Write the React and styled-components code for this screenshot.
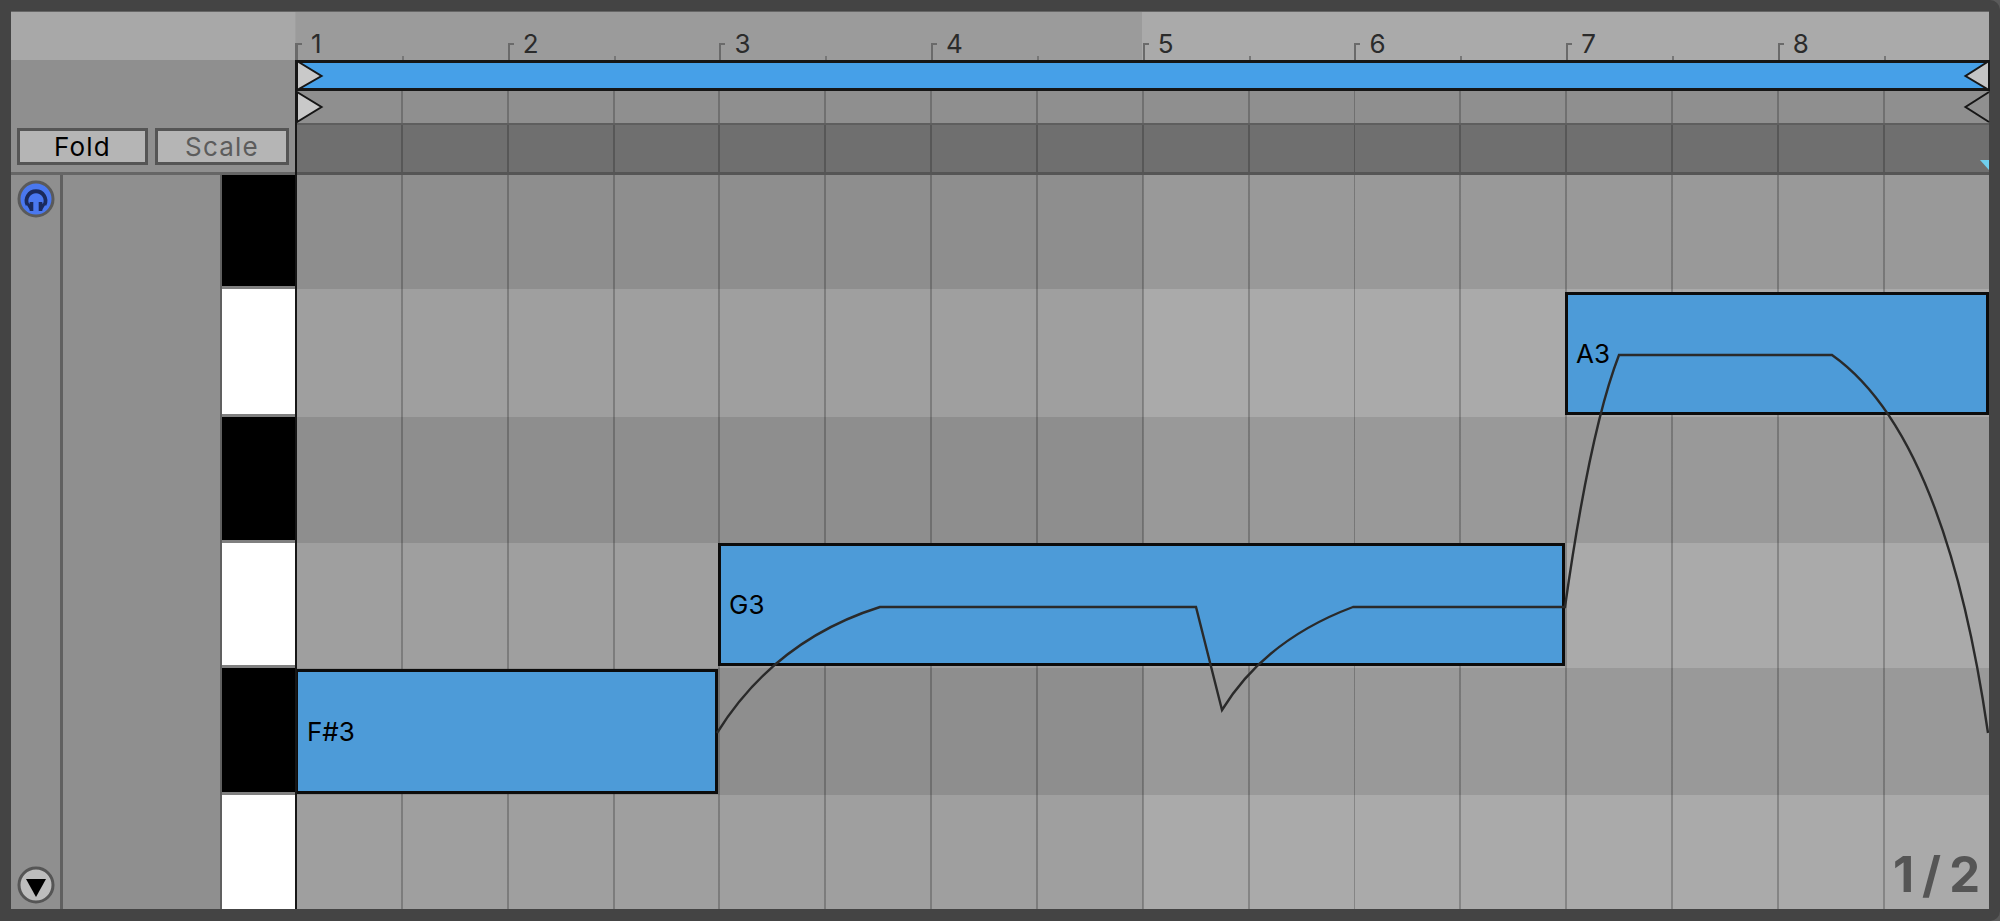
import React from "react";
import styled, { createGlobalStyle } from "styled-components";

const GlobalStyle = createGlobalStyle`
  html, body {
    margin: 0;
    padding: 0;
    background: #5a5a5a;
  }
  body {
    font-family: "Inter", "Liberation Sans", sans-serif;
  }
`;

const BEAT = 105.85;

// bar and half-bar lines, repeated across the whole arrangement width
const beatLines = `repeating-linear-gradient(to right, transparent 0 ${BEAT - 2}px, rgba(0, 0, 0, 0.22) ${BEAT - 2}px ${BEAT}px)`;

const Frame = styled.div`
  width: 2000px;
  height: 921px;
  box-sizing: border-box;
  padding: 12px 11px 12px 11px;
  background: #444444;
  border-radius: 0 10px 10px 0;
  overflow: hidden;
`;

const Panel = styled.div`
  height: 897px;
  display: grid;
  grid-template-columns: 284px 2px 1692px;
  grid-template-rows: 163px 734px;
  box-shadow: 0 -1px 0 #666666;
  background: #8f8f8f;
`;

const HeadLeft = styled.div`
  grid-column: 1;
  grid-row: 1;
  display: flex;
  flex-direction: column;
  border-bottom: 3px solid #666666;
  box-sizing: border-box;
`;

const HeadCap = styled.div`
  height: 48px;
  background: #a8a8a8;
`;

const ButtonRow = styled.div`
  flex: 1;
  display: flex;
  align-items: flex-end;
  gap: 7px;
  padding: 0 6px 7px 6px;
`;

const ToggleButton = styled.button`
  width: ${(p) => p.$width}px;
  height: 37px;
  padding: 0;
  box-sizing: border-box;
  border: 3px solid #555555;
  background: #b5b5b5;
  color: ${(p) => (p.$dim ? "#5c5c5c" : "#000000")};
  font-family: "Inter", "Liberation Sans", sans-serif;
  font-size: 26px;
  line-height: 30px;
  letter-spacing: 1.2px;
`;

const HeadDivider = styled.div`
  grid-column: 2;
  grid-row: 1;
  background: linear-gradient(to bottom, #a0a0a0 0 31px, #6a6a6a 31px 48px, #161616 48px);
`;

const BodyDivider = styled.div`
  grid-column: 2;
  grid-row: 2;
  background: #161616;
`;

const Timeline = styled.div`
  grid-column: 3;
  grid-row: 1;
  position: relative;
  display: flex;
  flex-direction: column;
`;

const Ruler = styled.div`
  height: 48px;
  display: grid;
  grid-template-columns: repeat(16, ${BEAT}px);
  margin-left: -1px;
  background: linear-gradient(to right, #9b9b9b 50%, #aaaaaa 50%);
`;

const RulerCell = styled.div`
  display: flex;
  align-items: flex-end;
`;

const BarTick = styled.span`
  width: 2px;
  height: 17px;
  background: #6a6a6a;
  position: relative;

  &::after {
    content: "";
    position: absolute;
    left: 0;
    top: 0;
    width: 6px;
    height: 2px;
    background: #6a6a6a;
  }
`;

const HalfTick = styled.span`
  width: 2px;
  height: 4px;
  background: #777777;
`;

const BarNumber = styled.span`
  font-size: 26px;
  line-height: 30px;
  color: #2b2b2b;
  margin: 0 0 1px 13px;
`;

const LoopStrip = styled.div`
  height: 25px;
  border-top: 3px solid #161616;
  border-bottom: 3px solid #161616;
  background: #46a0e8;
`;

const StartBand = styled.div`
  height: 32px;
  border-bottom: 2px solid #5e5e5e;
  background: ${beatLines}, #8f8f8f;
`;

const FoldBand = styled.div`
  position: relative;
  flex: 1;
  border-bottom: 3px solid #555555;
  background: ${beatLines}, #6f6f6f;
`;

const Markers = styled.svg`
  position: absolute;
  left: -1px;
  top: 48px;
  pointer-events: none;
`;

const Flag = styled.div`
  position: absolute;
  right: 0;
  bottom: 2px;
  width: 9px;
  height: 10px;
  background: #6fcfee;
  clip-path: polygon(0 0, 100% 0, 100% 100%);
`;

const Sidebar = styled.div`
  grid-column: 1;
  grid-row: 2;
  display: flex;
  height: 734px;
`;

const IconColumn = styled.div`
  width: 52px;
  flex-shrink: 0;
  display: flex;
  flex-direction: column;
  align-items: center;
  justify-content: space-between;
  padding: 5px 0;
  box-sizing: border-box;
  border-right: 3px solid #606060;
`;

const RoundIcon = styled.svg`
  display: block;
`;

const NameColumn = styled.div`
  width: 157px;
  border-right: 2px solid #606060;
  background: #8f8f8f;
`;

const Keyboard = styled.div`
  width: 73px;
  display: flex;
  flex-direction: column;
`;

const Key = styled.div`
  height: ${(p) => p.$height}px;
  box-sizing: border-box;
  background: ${(p) => (p.$black ? "#000000" : "#ffffff")};
  border-bottom: ${(p) => (p.$last ? "none" : "3px solid #808080")};
`;

const Roll = styled.div`
  grid-column: 3;
  grid-row: 2;
  position: relative;
  display: flex;
  flex-direction: column;
  overflow: hidden;
`;

const Lane = styled.div`
  height: ${(p) => p.$height}px;
  background: ${beatLines},
    linear-gradient(
      to right,
      ${(p) => (p.$black ? "#8e8e8e" : "#9f9f9f")} 50%,
      ${(p) => (p.$black ? "#999999" : "#aaaaaa")} 50%
    );
`;

const Note = styled.div`
  position: absolute;
  left: ${(p) => p.$left - 297}px;
  top: ${(p) => p.$top - 175}px;
  width: ${(p) => p.$right - p.$left}px;
  height: ${(p) => p.$bottom - p.$top}px;
  box-sizing: border-box;
  display: flex;
  align-items: center;
  padding-left: ${(p) => p.$pad}px;
  border: 3px solid #0c0c0c;
  background: #4d9bd8;
  color: #000000;
  font-size: 26px;
`;

const PitchCurve = styled.svg`
  position: absolute;
  left: 0;
  top: 0;
`;

const PageBadge = styled.div`
  position: absolute;
  right: 1px;
  bottom: 8px;
  color: #555555;
  font-size: 49px;
  line-height: 52px;
  font-weight: 700;
  letter-spacing: 8px;
`;

const lanes = [
  { black: true, height: 114 },
  { black: false, height: 128 },
  { black: true, height: 126 },
  { black: false, height: 125 },
  { black: true, height: 127 },
  { black: false, height: 114 },
];

const notes = [
  { name: "F#3", left: 295, right: 718, top: 669, bottom: 794, pad: 9 },
  { name: "G3", left: 718, right: 1565, top: 543, bottom: 666, pad: 8 },
  { name: "A3", left: 1565, right: 1989, top: 292, bottom: 415, pad: 8 },
];

const beats = Array.from({ length: 16 }, (_, i) => i);

const HeadphonesIcon = () => (
  <RoundIcon width="38" height="38" viewBox="0 0 38 38">
    <circle cx="19" cy="19" r="17" fill="#4a78f0" stroke="#5a5a5a" strokeWidth="3" />
    <path d="M10.5 25 A9.5 9.5 0 1 1 27.5 25" fill="none" stroke="#1b2a5c" strokeWidth="3.8" />
    <path d="M14.5 22 V31 M23.5 22 V31" fill="none" stroke="#1b2a5c" strokeWidth="3.6" />
    <path d="M11 24 L14 29 M27 24 L24 29" fill="none" stroke="#1b2a5c" strokeWidth="3" />
  </RoundIcon>
);

const DownIcon = () => (
  <RoundIcon width="38" height="38" viewBox="0 0 38 38">
    <circle cx="19" cy="19" r="17" fill="#bdbdbd" stroke="#555555" strokeWidth="3" />
    <path d="M9 13 H29 L19 31 Z" fill="#000000" />
  </RoundIcon>
);

export default function App() {
  return (
    <>
      <GlobalStyle />
      <Frame>
        <Panel>
          <HeadLeft>
            <HeadCap />
            <ButtonRow>
              <ToggleButton $width={131}>Fold</ToggleButton>
              <ToggleButton $width={134} $dim>
                Scale
              </ToggleButton>
            </ButtonRow>
          </HeadLeft>
          <HeadDivider />
          <Timeline>
            <Ruler>
              {beats.map((i) => (
                <RulerCell key={i}>
                  {i % 2 === 0 ? (
                    <>
                      <BarTick />
                      <BarNumber>{i / 2 + 1}</BarNumber>
                    </>
                  ) : (
                    <HalfTick />
                  )}
                </RulerCell>
              ))}
            </Ruler>
            <LoopStrip />
            <StartBand />
            <FoldBand>
              <Flag />
            </FoldBand>
            <Markers width="1694" height="64" viewBox="0 0 1694 64">
              <path d="M1 1 L25.5 16 L1 30 Z" fill="#c9c9c9" stroke="#161616" strokeWidth="2" />
              <path d="M1 32 L25.5 47 L1 62 Z" fill="#c9c9c9" stroke="#161616" strokeWidth="2" />
              <path d="M1693 1 L1669.5 16 L1693 30 Z" fill="#c4c4c4" stroke="#161616" strokeWidth="2" />
              <path d="M1693 32 L1669.5 47 L1693 62" fill="none" stroke="#161616" strokeWidth="2" />
            </Markers>
          </Timeline>

          <Sidebar>
            <IconColumn>
              <HeadphonesIcon />
              <DownIcon />
            </IconColumn>
            <NameColumn />
            <Keyboard>
              {lanes.map((lane, i) => (
                <Key key={i} $black={lane.black} $height={lane.height} $last={i === lanes.length - 1} />
              ))}
            </Keyboard>
          </Sidebar>
          <BodyDivider />
          <Roll>
            {lanes.map((lane, i) => (
              <Lane key={i} $black={lane.black} $height={lane.height} />
            ))}
            {notes.map((note) => (
              <Note key={note.name} $left={note.left} $right={note.right} $top={note.top} $bottom={note.bottom} $pad={note.pad}>
                {note.name}
              </Note>
            ))}
            <PitchCurve width="1692" height="734" viewBox="297 175 1692 734">
              <path
                d="M717 733 Q775 640 880 607 L1196 607 L1222 710 Q1265 640 1353 607 L1565 607 Q1590 430 1619 355 L1832 355 Q1945 435 1988 733"
                fill="none"
                stroke="#2a2a2a"
                strokeWidth="2.4"
              />
            </PitchCurve>
            <PageBadge>1/2</PageBadge>
          </Roll>
        </Panel>
      </Frame>
    </>
  );
}
